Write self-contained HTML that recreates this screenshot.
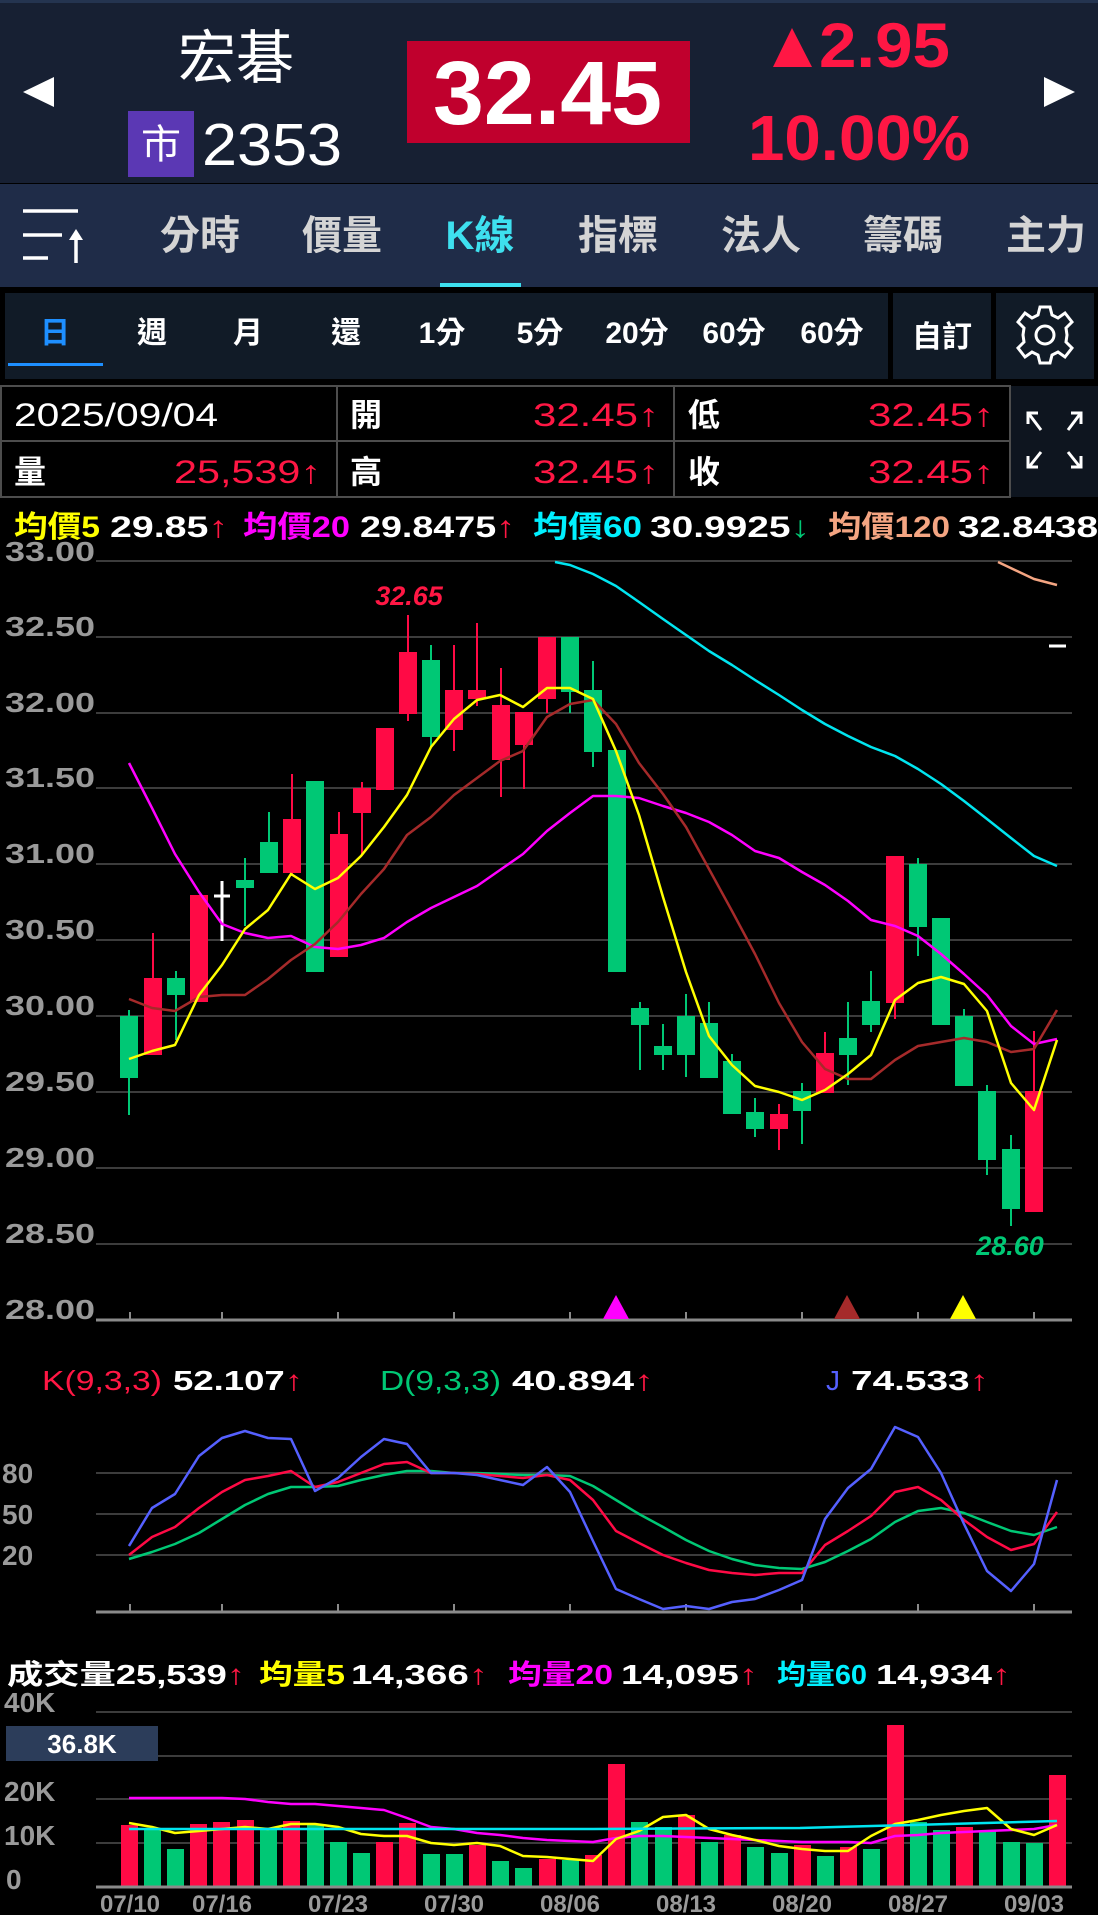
<!DOCTYPE html>
<html><head><meta charset="utf-8"><style>
html,body{margin:0;padding:0;background:#000;}
svg{display:block;}
text{font-family:"Liberation Sans","Noto Sans CJK TC",sans-serif;}
</style></head><body>
<svg width="1098" height="1915" viewBox="0 0 1098 1915" xmlns="http://www.w3.org/2000/svg">
<rect x="0" y="0" width="1098" height="1915" fill="#000"/>
<!-- header -->
<rect x="0" y="0" width="1098" height="183" fill="#172033"/>
<rect x="0" y="0" width="1098" height="3" fill="#243450"/>
<polygon points="54,77 54,107 23,92" fill="#fff"/>
<polygon points="1044,77 1044,107 1075,92" fill="#fff"/>
<text x="236" y="78" font-size="58" fill="#fff" text-anchor="middle">宏碁</text>
<rect x="128" y="111" width="66" height="66" fill="#5b38b4"/>
<text x="161" y="158" font-size="40" fill="#fff" text-anchor="middle">市</text>
<text x="202" y="165" font-size="59" fill="#fff" textLength="140" lengthAdjust="spacingAndGlyphs">2353</text>
<rect x="407" y="41" width="283" height="102" fill="#c0002d"/>
<text x="433" y="124" font-size="90" font-weight="bold" fill="#fff" textLength="229" lengthAdjust="spacingAndGlyphs">32.45</text>
<polygon points="773,67 792,28 812,67" fill="#ff1744"/>
<text x="819" y="67" font-size="63" font-weight="bold" fill="#ff1744" textLength="131" lengthAdjust="spacingAndGlyphs">2.95</text>
<text x="748" y="160" font-size="64" font-weight="bold" fill="#ff1744" textLength="222" lengthAdjust="spacingAndGlyphs">10.00%</text>
<!-- tab bar -->
<rect x="0" y="184" width="1098" height="103" fill="#1f2c48"/>
<g stroke="#fff" stroke-width="3.5">
<line x1="23" y1="211" x2="78" y2="211"/><line x1="23" y1="235" x2="62" y2="235"/><line x1="23" y1="258" x2="48" y2="258"/><line x1="76" y1="236" x2="76" y2="263"/></g>
<polygon points="69,240 76,229 83,240" fill="#fff"/>
<g font-size="40" font-weight="bold" fill="#d4d4d4" text-anchor="middle">
<text x="200" y="249">分時</text><text x="342" y="249">價量</text>
<text x="480" y="249" fill="#3ee0ef">K線</text>
<text x="618" y="249">指標</text><text x="761" y="249">法人</text><text x="903" y="249">籌碼</text><text x="1046" y="249">主力</text></g>
<rect x="440" y="283" width="81" height="4" fill="#3ee0ef"/>
<!-- period bar -->
<rect x="5" y="293" width="883" height="86" fill="#111b27"/>
<rect x="893" y="293" width="98" height="86" fill="#111b27"/>
<rect x="996" y="293" width="98" height="86" fill="#111b27"/>
<g font-size="30" font-weight="bold" fill="#fff" text-anchor="middle">
<text x="55" y="343" fill="#1e8fff">日</text><text x="152" y="343">週</text><text x="248" y="343">月</text><text x="346" y="343">還</text>
<text x="442" y="343">1分</text><text x="540" y="343">5分</text><text x="637" y="343">20分</text><text x="734" y="343">60分</text><text x="832" y="343">60分</text>
<text x="942" y="347">自訂</text></g>
<rect x="8" y="363" width="95" height="3" fill="#1e8fff"/>
<g transform="translate(1045,335)" fill="none" stroke="#fff" stroke-width="3">
<path d="M-5,-28 L5,-28 L7,-20 L13,-17 L20,-22 L27,-13 L21,-7 L22,0 L21,7 L27,13 L20,22 L13,17 L7,20 L5,28 L-5,28 L-7,20 L-13,17 L-20,22 L-27,13 L-21,7 L-22,0 L-21,-7 L-27,-13 L-20,-22 L-13,-17 L-7,-20 Z"/>
<circle r="9"/></g>
<!-- info table -->
<g stroke="#4d4d4d" stroke-width="2" fill="none">
<rect x="1" y="386" width="1009" height="111"/>
<line x1="0" y1="441" x2="1010" y2="441"/>
<line x1="337" y1="386" x2="337" y2="497"/><line x1="674" y1="386" x2="674" y2="497"/></g>
<rect x="1011" y="386" width="87" height="111" fill="#0e151f"/>
<g font-size="32">
<text x="14" y="426" fill="#fff" textLength="204" lengthAdjust="spacingAndGlyphs">2025/09/04</text>
<text x="350" y="426" fill="#fff" font-weight="bold">開</text>
<text x="533" y="426" fill="#ff1744" textLength="126" lengthAdjust="spacingAndGlyphs">32.45↑</text>
<text x="688" y="426" fill="#fff" font-weight="bold">低</text>
<text x="868" y="426" fill="#ff1744" textLength="126" lengthAdjust="spacingAndGlyphs">32.45↑</text>
<text x="14" y="483" fill="#fff" font-weight="bold">量</text>
<text x="174" y="483" fill="#ff1744" textLength="147" lengthAdjust="spacingAndGlyphs">25,539↑</text>
<text x="350" y="483" fill="#fff" font-weight="bold">高</text>
<text x="533" y="483" fill="#ff1744" textLength="126" lengthAdjust="spacingAndGlyphs">32.45↑</text>
<text x="688" y="483" fill="#fff" font-weight="bold">收</text>
<text x="868" y="483" fill="#ff1744" textLength="126" lengthAdjust="spacingAndGlyphs">32.45↑</text></g>
<g stroke="#fff" stroke-width="3" fill="none">
<path d="M1041,430 L1029,414 M1028,424 L1028,413 L1038,413"/>
<path d="M1068,430 L1080,414 M1071,413 L1081,413 L1081,424"/>
<path d="M1041,452 L1029,467 M1028,456 L1028,467 L1038,467"/>
<path d="M1068,452 L1080,467 M1071,467 L1081,467 L1081,456"/></g>
<!-- MA legend -->
<g font-size="30" font-weight="bold">
<text x="14" y="537" fill="#ffff00" textLength="86" lengthAdjust="spacingAndGlyphs">均價5</text>
<text x="110" y="537" fill="#fff" textLength="118" lengthAdjust="spacingAndGlyphs">29.85<tspan fill="#ff1744">↑</tspan></text>
<text x="243" y="537" fill="#ff00ff" textLength="107" lengthAdjust="spacingAndGlyphs">均價20</text>
<text x="360" y="537" fill="#fff" textLength="155" lengthAdjust="spacingAndGlyphs">29.8475<tspan fill="#ff1744">↑</tspan></text>
<text x="533" y="537" fill="#00f0ff" textLength="109" lengthAdjust="spacingAndGlyphs">均價60</text>
<text x="650" y="537" fill="#fff" textLength="160" lengthAdjust="spacingAndGlyphs">30.9925<tspan fill="#00c875">↓</tspan></text>
<text x="828" y="537" fill="#f4a582" textLength="122" lengthAdjust="spacingAndGlyphs">均價120</text>
<text x="958" y="537" fill="#fff" textLength="140" lengthAdjust="spacingAndGlyphs">32.8438</text></g>
<!-- price grid -->
<g stroke="#3c3c3c" stroke-width="2">
<line x1="96" y1="561" x2="1072" y2="561"/><line x1="96" y1="637" x2="1072" y2="637"/><line x1="96" y1="713" x2="1072" y2="713"/><line x1="96" y1="788" x2="1072" y2="788"/><line x1="96" y1="864" x2="1072" y2="864"/><line x1="96" y1="940" x2="1072" y2="940"/><line x1="96" y1="1016" x2="1072" y2="1016"/><line x1="96" y1="1092" x2="1072" y2="1092"/><line x1="96" y1="1168" x2="1072" y2="1168"/><line x1="96" y1="1244" x2="1072" y2="1244"/></g>
<line x1="96" y1="1320" x2="1072" y2="1320" stroke="#8a8a8a" stroke-width="3"/>
<g stroke="#8a8a8a" stroke-width="2">
<line x1="130" y1="1312" x2="130" y2="1320"/><line x1="222" y1="1312" x2="222" y2="1320"/><line x1="338" y1="1312" x2="338" y2="1320"/><line x1="454" y1="1312" x2="454" y2="1320"/><line x1="570" y1="1312" x2="570" y2="1320"/><line x1="686" y1="1312" x2="686" y2="1320"/><line x1="802" y1="1312" x2="802" y2="1320"/><line x1="918" y1="1312" x2="918" y2="1320"/><line x1="1034" y1="1312" x2="1034" y2="1320"/></g>
<g font-size="28" font-weight="bold" fill="#9a9a9a">
<text x="5" y="561" textLength="90" lengthAdjust="spacingAndGlyphs">33.00</text>
<text x="5" y="636" textLength="90" lengthAdjust="spacingAndGlyphs">32.50</text>
<text x="5" y="712" textLength="90" lengthAdjust="spacingAndGlyphs">32.00</text>
<text x="5" y="787" textLength="90" lengthAdjust="spacingAndGlyphs">31.50</text>
<text x="5" y="863" textLength="90" lengthAdjust="spacingAndGlyphs">31.00</text>
<text x="5" y="939" textLength="90" lengthAdjust="spacingAndGlyphs">30.50</text>
<text x="5" y="1015" textLength="90" lengthAdjust="spacingAndGlyphs">30.00</text>
<text x="5" y="1091" textLength="90" lengthAdjust="spacingAndGlyphs">29.50</text>
<text x="5" y="1167" textLength="90" lengthAdjust="spacingAndGlyphs">29.00</text>
<text x="5" y="1243" textLength="90" lengthAdjust="spacingAndGlyphs">28.50</text>
<text x="5" y="1319" textLength="90" lengthAdjust="spacingAndGlyphs">28.00</text></g>
<!-- candles -->
<g stroke-width="2">
<g fill="#00c875" stroke="#00c875">
<line x1="129" y1="1010" x2="129" y2="1115"/><rect x="121" y="1017" width="16" height="60"/>
<line x1="176" y1="971" x2="176" y2="1040"/><rect x="168" y="979" width="16" height="15"/>
<line x1="245" y1="858" x2="245" y2="926"/><rect x="237" y="881" width="16" height="6"/>
<line x1="269" y1="812" x2="269" y2="872"/><rect x="261" y="843" width="16" height="29"/>
<rect x="307" y="782" width="16" height="189"/>
<line x1="431" y1="645" x2="431" y2="747"/><rect x="423" y="661" width="16" height="75"/>
<line x1="570" y1="638" x2="570" y2="713"/><rect x="562" y="638" width="16" height="53"/>
<line x1="593" y1="661" x2="593" y2="767"/><rect x="585" y="691" width="16" height="60"/>
<rect x="609" y="751" width="16" height="220"/>
<line x1="640" y1="1002" x2="640" y2="1070"/><rect x="632" y="1009" width="16" height="15"/>
<line x1="663" y1="1024" x2="663" y2="1070"/><rect x="655" y="1047" width="16" height="7"/>
<line x1="686" y1="994" x2="686" y2="1077"/><rect x="678" y="1017" width="16" height="37"/>
<line x1="709" y1="1002" x2="709" y2="1077"/><rect x="701" y="1024" width="16" height="53"/>
<line x1="732" y1="1054" x2="732" y2="1113"/><rect x="724" y="1062" width="16" height="51"/>
<line x1="755" y1="1098" x2="755" y2="1137"/><rect x="747" y="1113" width="16" height="15"/>
<line x1="802" y1="1083" x2="802" y2="1144"/><rect x="794" y="1092" width="16" height="18"/>
<line x1="848" y1="1002" x2="848" y2="1085"/><rect x="840" y="1039" width="16" height="15"/>
<line x1="871" y1="971" x2="871" y2="1032"/><rect x="863" y="1002" width="16" height="22"/>
<line x1="918" y1="858" x2="918" y2="956"/><rect x="910" y="865" width="16" height="61"/>
<rect x="933" y="919" width="16" height="105"/>
<line x1="964" y1="1009" x2="964" y2="1085"/><rect x="956" y="1017" width="16" height="68"/>
<line x1="987" y1="1085" x2="987" y2="1175"/><rect x="979" y="1092" width="16" height="67"/>
<line x1="1011" y1="1135" x2="1011" y2="1226"/><rect x="1003" y="1150" width="16" height="58"/>
</g>
<g fill="#ff0a45" stroke="#ff0a45">
<line x1="153" y1="933" x2="153" y2="1054"/><rect x="145" y="979" width="16" height="75"/>
<rect x="191" y="896" width="16" height="105"/>
<line x1="292" y1="774" x2="292" y2="876"/><rect x="284" y="820" width="16" height="52"/>
<line x1="339" y1="812" x2="339" y2="956"/><rect x="331" y="835" width="16" height="121"/>
<line x1="362" y1="782" x2="362" y2="854"/><rect x="354" y="789" width="16" height="23"/>
<rect x="377" y="729" width="16" height="60"/>
<line x1="408" y1="615" x2="408" y2="721"/><rect x="400" y="653" width="16" height="60"/>
<line x1="454" y1="645" x2="454" y2="751"/><rect x="446" y="691" width="16" height="38"/>
<line x1="477" y1="623" x2="477" y2="706"/><rect x="469" y="691" width="16" height="7"/>
<line x1="501" y1="668" x2="501" y2="797"/><rect x="493" y="706" width="16" height="53"/>
<line x1="524" y1="713" x2="524" y2="789"/><rect x="516" y="713" width="16" height="31"/>
<line x1="547" y1="638" x2="547" y2="713"/><rect x="539" y="638" width="16" height="60"/>
<line x1="779" y1="1104" x2="779" y2="1150"/><rect x="771" y="1115" width="16" height="13"/>
<line x1="825" y1="1032" x2="825" y2="1092"/><rect x="817" y="1054" width="16" height="38"/>
<line x1="895" y1="857" x2="895" y2="1019"/><rect x="887" y="857" width="16" height="145"/>
<line x1="1034" y1="1031" x2="1034" y2="1211"/><rect x="1026" y="1092" width="16" height="119"/>
</g>
<g stroke="#fff" stroke-width="3">
<line x1="222" y1="881" x2="222" y2="941"/><line x1="214" y1="896" x2="230" y2="896"/>
<line x1="1049" y1="646" x2="1066" y2="646"/></g>
</g>
<!-- MAs -->
<g fill="none" stroke-width="2.5" stroke-linejoin="round">
<polyline stroke="#ff00ff" points="129,763 152,808 175,854 199,892 222,924 245,933 268,938 291,936 315,947 338,949 361,945 384,938 407,922 431,908 454,897 477,886 500,870 523,854 547,831 570,813 593,796 616,796 639,798 663,806 686,813 709,822 732,835 755,851 779,858 802,872 825,885 848,901 871,920 895,926 918,936 941,954 964,974 987,995 1011,1026 1034,1044 1057,1039"/>
<polyline stroke="#a52a2a" points="129,999 152,1008 175,1011 199,997 222,995 245,995 268,979 291,960 315,944 338,922 361,894 384,869 407,835 431,817 454,795 477,778 500,761 523,751 547,717 570,704 593,700 616,724 639,763 663,794 686,827 709,869 732,911 755,954 779,1003 802,1042 825,1069 848,1079 871,1079 895,1060 918,1046 941,1042 964,1038 987,1042 1011,1052 1034,1049 1057,1010"/>
<polyline stroke="#ffff00" points="129,1059 152,1051 175,1045 199,995 222,965 245,929 268,910 291,874 315,889 338,878 361,856 384,827 407,795 431,747 454,719 477,700 500,695 523,707 547,688 570,688 593,699 616,751 639,815 663,897 686,972 709,1036 732,1065 755,1086 779,1092 802,1100 825,1090 848,1074 871,1055 895,1000 918,983 941,977 964,984 987,1011 1011,1083 1034,1110 1057,1040"/>
<polyline stroke="#00e5f0" points="555,562 570,565 593,574 616,586 639,602 663,619 686,635 709,651 732,665 755,680 779,695 802,710 825,724 848,736 871,747 895,756 918,769 941,784 964,801 987,819 1011,838 1034,856 1057,866"/>
<polyline stroke="#f4a582" points="998,562 1034,579 1057,585"/>
</g>
<text x="409" y="605" font-size="27" font-weight="bold" font-style="italic" fill="#ff1744" text-anchor="middle">32.65</text>
<text x="1010" y="1255" font-size="27" font-weight="bold" font-style="italic" fill="#00c875" text-anchor="middle">28.60</text>
<polygon points="603,1319 616,1295 629,1319" fill="#ff00ff"/>
<polygon points="834,1319 847,1295 860,1319" fill="#a52a2a"/>
<polygon points="950,1319 963,1295 976,1319" fill="#ffff00"/>
<!-- KDJ -->
<g font-size="28">
<text x="42" y="1390" fill="#ff1744" textLength="120" lengthAdjust="spacingAndGlyphs">K(9,3,3)</text>
<text x="173" y="1390" fill="#fff" font-weight="bold" textLength="130" lengthAdjust="spacingAndGlyphs">52.107<tspan fill="#ff1744">↑</tspan></text>
<text x="380" y="1390" fill="#00c875" textLength="121" lengthAdjust="spacingAndGlyphs">D(9,3,3)</text>
<text x="512" y="1390" fill="#fff" font-weight="bold" textLength="142" lengthAdjust="spacingAndGlyphs">40.894<tspan fill="#ff1744">↑</tspan></text>
<text x="826" y="1390" fill="#5560ff">J</text>
<text x="851" y="1390" fill="#fff" font-weight="bold" textLength="138" lengthAdjust="spacingAndGlyphs">74.533<tspan fill="#ff1744">↑</tspan></text></g>
<g stroke="#3c3c3c" stroke-width="2"><line x1="96" y1="1473" x2="1072" y2="1473"/><line x1="96" y1="1514" x2="1072" y2="1514"/><line x1="96" y1="1555" x2="1072" y2="1555"/></g>
<line x1="96" y1="1612" x2="1072" y2="1612" stroke="#8a8a8a" stroke-width="3"/>
<g stroke="#8a8a8a" stroke-width="2">
<line x1="130" y1="1604" x2="130" y2="1612"/><line x1="222" y1="1604" x2="222" y2="1612"/><line x1="338" y1="1604" x2="338" y2="1612"/><line x1="454" y1="1604" x2="454" y2="1612"/><line x1="570" y1="1604" x2="570" y2="1612"/><line x1="686" y1="1604" x2="686" y2="1612"/><line x1="802" y1="1604" x2="802" y2="1612"/><line x1="918" y1="1604" x2="918" y2="1612"/><line x1="1034" y1="1604" x2="1034" y2="1612"/></g>
<g font-size="28" font-weight="bold" fill="#9a9a9a">
<text x="2" y="1483">80</text><text x="2" y="1524">50</text><text x="2" y="1565">20</text></g>
<g fill="none" stroke-width="2.5" stroke-linejoin="round">
<polyline stroke="#00c875" points="129,1559 152,1552 175,1544 199,1533 222,1519 245,1505 268,1494 291,1487 315,1487 338,1486 361,1480 384,1475 407,1471 431,1471 454,1473 477,1473 500,1474 523,1475 547,1475 570,1476 593,1486 616,1500 639,1514 663,1527 686,1540 709,1551 732,1559 755,1565 779,1568 802,1569 825,1562 848,1551 871,1539 895,1522 918,1511 941,1508 964,1513 987,1522 1011,1531 1034,1535 1057,1527"/>
<polyline stroke="#ff0a45" points="129,1555 152,1537 175,1527 199,1508 222,1492 245,1480 268,1476 291,1471 315,1487 338,1482 361,1473 384,1464 407,1462 431,1473 454,1473 477,1474 500,1476 523,1478 547,1475 570,1480 593,1500 616,1531 639,1543 663,1555 686,1563 709,1570 732,1573 755,1575 779,1573 802,1573 825,1545 848,1531 871,1516 895,1492 918,1487 941,1500 964,1520 987,1537 1011,1550 1034,1544 1057,1512"/>
<polyline stroke="#5560ff" points="129,1546 152,1508 175,1494 199,1456 222,1438 245,1431 268,1438 291,1439 315,1491 338,1478 361,1457 384,1439 407,1444 431,1473 454,1473 477,1475 500,1480 523,1485 547,1467 570,1492 593,1541 616,1589 639,1599 663,1609 686,1606 709,1609 732,1602 755,1599 779,1590 802,1580 825,1519 848,1488 871,1469 895,1427 918,1437 941,1473 964,1524 987,1571 1011,1591 1034,1564 1057,1480"/>
</g>
<!-- Volume -->
<g font-size="28" font-weight="bold">
<text x="7" y="1684" fill="#fff" textLength="238" lengthAdjust="spacingAndGlyphs">成交量25,539<tspan fill="#ff1744">↑</tspan></text>
<text x="259" y="1684" fill="#ffff00" textLength="86" lengthAdjust="spacingAndGlyphs">均量5</text>
<text x="351" y="1684" fill="#fff" textLength="137" lengthAdjust="spacingAndGlyphs">14,366<tspan fill="#ff1744">↑</tspan></text>
<text x="508" y="1684" fill="#ff00ff" textLength="105" lengthAdjust="spacingAndGlyphs">均量20</text>
<text x="621" y="1684" fill="#fff" textLength="137" lengthAdjust="spacingAndGlyphs">14,095<tspan fill="#ff1744">↑</tspan></text>
<text x="777" y="1684" fill="#00f0ff" textLength="90" lengthAdjust="spacingAndGlyphs">均量60</text>
<text x="876" y="1684" fill="#fff" textLength="135" lengthAdjust="spacingAndGlyphs">14,934<tspan fill="#ff1744">↑</tspan></text></g>
<g stroke="#3c3c3c" stroke-width="2"><line x1="96" y1="1712" x2="1072" y2="1712"/><line x1="96" y1="1756" x2="1072" y2="1756"/><line x1="96" y1="1799" x2="1072" y2="1799"/><line x1="96" y1="1843" x2="1072" y2="1843"/></g>
<g font-size="28" font-weight="bold" fill="#9a9a9a">
<text x="4" y="1712">40K</text><text x="4" y="1801">20K</text><text x="4" y="1845">10K</text><text x="6" y="1889">0</text></g>
<rect x="6" y="1726" width="152" height="35" fill="#2c3d5a"/>
<text x="82" y="1753" font-size="26" font-weight="bold" fill="#fff" text-anchor="middle">36.8K</text>
<g fill="#ff0a45">
<rect x="121" y="1825" width="17" height="62"/><rect x="190" y="1824" width="17" height="63"/><rect x="213" y="1822" width="17" height="65"/><rect x="237" y="1820" width="17" height="67"/><rect x="283" y="1821" width="17" height="66"/><rect x="376" y="1842" width="17" height="45"/><rect x="399" y="1823" width="17" height="64"/><rect x="469" y="1845" width="17" height="42"/><rect x="539" y="1859" width="17" height="28"/><rect x="585" y="1855" width="17" height="32"/><rect x="608" y="1764" width="17" height="123"/><rect x="678" y="1815" width="17" height="72"/><rect x="724" y="1835" width="17" height="52"/><rect x="794" y="1845" width="17" height="42"/><rect x="840" y="1847" width="17" height="40"/><rect x="887" y="1725" width="17" height="162"/><rect x="956" y="1827" width="17" height="60"/><rect x="1049" y="1775" width="17" height="112"/></g>
<g fill="#00c875">
<rect x="144" y="1829" width="17" height="58"/><rect x="167" y="1849" width="17" height="38"/><rect x="260" y="1829" width="17" height="58"/><rect x="307" y="1825" width="17" height="62"/><rect x="330" y="1842" width="17" height="45"/><rect x="353" y="1853" width="17" height="34"/><rect x="423" y="1854" width="17" height="33"/><rect x="446" y="1854" width="17" height="33"/><rect x="492" y="1861" width="17" height="26"/><rect x="515" y="1868" width="17" height="19"/><rect x="562" y="1860" width="17" height="27"/><rect x="631" y="1822" width="17" height="65"/><rect x="655" y="1827" width="17" height="60"/><rect x="701" y="1842" width="17" height="45"/><rect x="747" y="1847" width="17" height="40"/><rect x="771" y="1853" width="17" height="34"/><rect x="817" y="1856" width="17" height="31"/><rect x="863" y="1849" width="17" height="38"/><rect x="910" y="1822" width="17" height="65"/><rect x="933" y="1830" width="17" height="57"/><rect x="979" y="1831" width="17" height="56"/><rect x="1003" y="1842" width="17" height="45"/><rect x="1026" y="1843" width="17" height="44"/></g>
<g fill="none" stroke-width="2.5" stroke-linejoin="round">
<polyline stroke="#ff00ff" points="129,1798 152,1798 175,1798 199,1798 222,1798 245,1799 268,1802 291,1804 315,1804 338,1806 361,1808 384,1810 407,1818 431,1827 454,1829 477,1833 500,1835 523,1838 547,1840 570,1841 593,1842 616,1838 639,1836 663,1836 686,1837 709,1838 732,1839 755,1840 779,1841 802,1842 825,1842 848,1842 871,1843 895,1836 918,1835 941,1833 964,1832 987,1831 1011,1830 1034,1829 1057,1825"/>
<polyline stroke="#ffff00" points="129,1823 152,1827 175,1833 199,1831 222,1829 245,1827 268,1829 291,1824 315,1824 338,1827 361,1834 384,1836 407,1836 431,1843 454,1845 477,1843 500,1846 523,1856 547,1857 570,1859 593,1861 616,1839 639,1831 663,1817 686,1815 709,1829 732,1835 755,1840 779,1846 802,1849 825,1851 848,1851 871,1836 895,1824 918,1820 941,1815 964,1811 987,1808 1011,1829 1034,1835 1057,1825"/>
<polyline stroke="#00e5f0" points="129,1829 593,1829 800,1828 1057,1821"/>
</g>
<line x1="96" y1="1887" x2="1072" y2="1887" stroke="#8a8a8a" stroke-width="3"/>
<g font-size="24" font-weight="bold" fill="#9a9a9a" text-anchor="middle">
<text x="130" y="1912">07/10</text><text x="222" y="1912">07/16</text><text x="338" y="1912">07/23</text><text x="454" y="1912">07/30</text><text x="570" y="1912">08/06</text><text x="686" y="1912">08/13</text><text x="802" y="1912">08/20</text><text x="918" y="1912">08/27</text><text x="1034" y="1912">09/03</text></g>
</svg>
</body></html>
